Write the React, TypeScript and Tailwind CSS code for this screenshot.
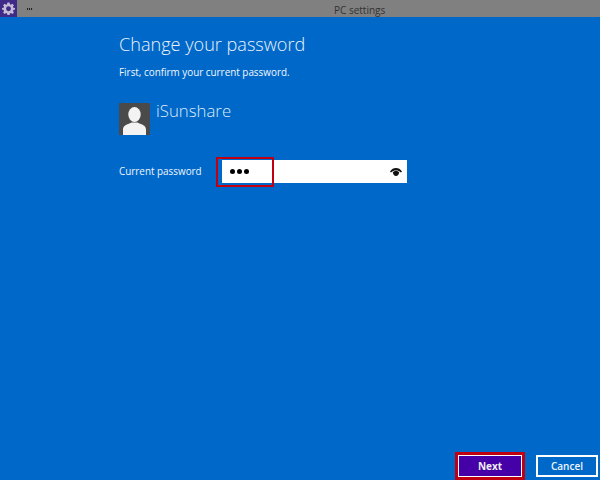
export default function App() {
  const font = "font-['Open_Sans','Noto_Sans',sans-serif]";
  return (
    <div className={`w-[600px] h-[480px] overflow-hidden flex flex-col bg-[#0068c8] ${font}`}>
      <div className="h-[17px] shrink-0 bg-[#808080] flex items-center relative">
        <div className="w-[17px] h-[17px] bg-[#3f2a87] flex items-center justify-center">
          <svg width="13" height="13" viewBox="0 0 24 24" fill="#c4bcd6">
            <path fillRule="evenodd" d="M10 1h4l.6 3.2 1.900.8L19.200 3.200 22 6l-1.800 2.700.8 1.900L24 11v3l-3 .6-.8 1.900L22 19.200 19.200 22l-2.700-1.800-1.900.8L14 24h-4l-.6-3-1.900-.8L4.800 22 2 19.200l1.800-2.700-.8-1.900L0 14v-3l3-.4.8-1.900L2 6l2.800-2.800L7.500 5l1.900-.8L10 1zm2 7a4.500 4.500 0 1 0 0 9 4.500 4.500 0 0 0 0-9z" />
          </svg>
        </div>
        <div className="ml-[10px] mt-[1px] w-[6px] h-[2px] bg-[repeating-linear-gradient(90deg,#222_0,#222_1.500px,#777_1.500px,#777_2px)]" />
        <span className="absolute left-[334px] top-[1px] text-[10px] leading-[18px] text-[#333]">PC settings</span>
      </div>

      <div className="flex-1 flex flex-col pl-[119px] pr-[2px]">
        <h1 className="mt-[15px] text-[18.100px] leading-[25px] font-light text-[#eaf3fb]">Change your password</h1>
        <p className="mt-[8px] text-[9.900px] leading-[14px] text-[#f2f8fd]">First, confirm your current password.</p>

        <div className="mt-[24px] flex items-start gap-[6px]">
          <div className="w-[31px] h-[32px] bg-[#4a4a4a] overflow-hidden">
            <svg width="31" height="32" viewBox="0 0 31 32" fill="#f3f3f3">
              <ellipse cx="15.500" cy="11.500" rx="6.200" ry="7.500" />
              <path d="M4 32v-5.500c0-3.200 2.500-4.600 6.500-6l2-1h6l2 1c4 1.400 6.500 2.800 6.500 6V32z" />
            </svg>
          </div>
          <span className="mt-[-3px] text-[16.800px] leading-[22px] font-light text-[#dcebf8]">iSunshare</span>
        </div>

        <div className="mt-[25px] flex items-center h-[23px]">
          <label className="w-[103px] text-[9.900px] text-[#eef6fc]">Current password</label>
          <div className="relative w-[185px] h-[23px] bg-white flex items-center justify-between pl-[8px] pr-[5px]">
            <div className="flex gap-[2px]">
              <span className="w-[5px] h-[5px] rounded-full bg-black" />
              <span className="w-[5px] h-[5px] rounded-full bg-black" />
              <span className="w-[5px] h-[5px] rounded-full bg-black" />
            </div>
            <svg width="12" height="8" viewBox="0 0 12 8" fill="#111">
              <path d="M0 3.600C1.600 1.100 3.600 0 6 0s4.400 1.100 6 3.600l-1 .9C9.800 3 8 2.400 6 2.400S2.200 3 1 4.500z" />
              <path d="M2.800 4.200C3.600 3.300 4.700 2.900 6 2.900s2.400.4 3.200 1.300C9 6.400 7.600 8 6 8S3 6.400 2.800 4.200z" />
            </svg>
            <div className="absolute left-[-6px] top-[-3px] w-[58px] h-[30px] border-[2px] border-[#c00010]" />
          </div>
        </div>

        <div className="mt-auto mb-[3px] flex justify-end gap-[14px]">
          <button className="w-[64px] h-[22px] bg-[#4500a8] border-[1px] border-white text-[10px] font-bold text-[#eee] shadow-[0_0_0_3px_#c00010]">Next</button>
          <button className="w-[62px] h-[22px] border-[2px] border-white text-[10px] font-semibold text-[#eef6fc]">Cancel</button>
        </div>
      </div>
    </div>
  );
}
